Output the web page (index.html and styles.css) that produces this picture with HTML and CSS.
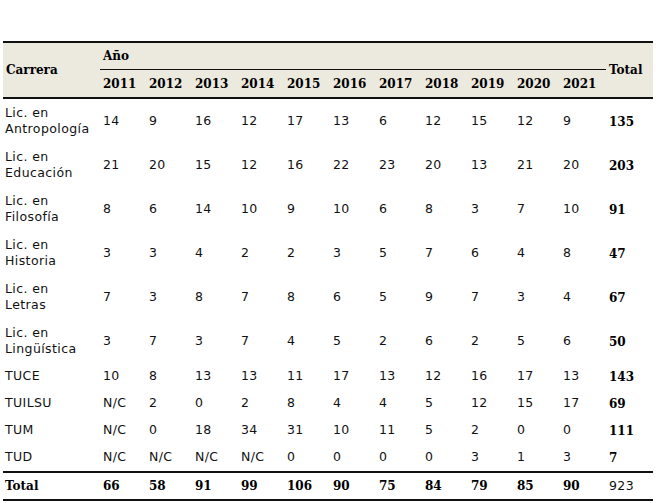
FILE: index.html
```html
<!DOCTYPE html>
<html lang="es">
<head>
<meta charset="utf-8">
<link rel="stylesheet" href="styles.css">
</head>
<body>
<table class="data">
  <colgroup>
    <col class="c-name">
    <col class="c-year"><col class="c-year"><col class="c-year"><col class="c-year"><col class="c-year"><col class="c-year"><col class="c-year"><col class="c-year"><col class="c-year"><col class="c-year"><col class="c-year">
    <col class="c-total">
  </colgroup>
  <thead>
    <tr class="h1">
      <th rowspan="2" class="hname">Carrera</th>
      <th colspan="11" class="hyear">Año</th>
      <th rowspan="2" class="htotal">Total</th>
    </tr>
    <tr class="h2">
      <th>2011</th><th>2012</th><th>2013</th><th>2014</th><th>2015</th><th>2016</th><th>2017</th><th>2018</th><th>2019</th><th>2020</th><th>2021</th>
    </tr>
  </thead>
  <tbody>
    <tr class="two"><td>Lic. en<br>Antropología</td><td>14</td><td>9</td><td>16</td><td>12</td><td>17</td><td>13</td><td>6</td><td>12</td><td>15</td><td>12</td><td>9</td><td class="tot">135</td></tr>
    <tr class="two"><td>Lic. en<br>Educación</td><td>21</td><td>20</td><td>15</td><td>12</td><td>16</td><td>22</td><td>23</td><td>20</td><td>13</td><td>21</td><td>20</td><td class="tot">203</td></tr>
    <tr class="two"><td>Lic. en<br>Filosofía</td><td>8</td><td>6</td><td>14</td><td>10</td><td>9</td><td>10</td><td>6</td><td>8</td><td>3</td><td>7</td><td>10</td><td class="tot">91</td></tr>
    <tr class="two"><td>Lic. en<br>Historia</td><td>3</td><td>3</td><td>4</td><td>2</td><td>2</td><td>3</td><td>5</td><td>7</td><td>6</td><td>4</td><td>8</td><td class="tot">47</td></tr>
    <tr class="two"><td>Lic. en<br>Letras</td><td>7</td><td>3</td><td>8</td><td>7</td><td>8</td><td>6</td><td>5</td><td>9</td><td>7</td><td>3</td><td>4</td><td class="tot">67</td></tr>
    <tr class="two"><td>Lic. en<br>Lingüística</td><td>3</td><td>7</td><td>3</td><td>7</td><td>4</td><td>5</td><td>2</td><td>6</td><td>2</td><td>5</td><td>6</td><td class="tot">50</td></tr>
    <tr class="one"><td>TUCE</td><td>10</td><td>8</td><td>13</td><td>13</td><td>11</td><td>17</td><td>13</td><td>12</td><td>16</td><td>17</td><td>13</td><td class="tot">143</td></tr>
    <tr class="one"><td>TUILSU</td><td>N/C</td><td>2</td><td>0</td><td>2</td><td>8</td><td>4</td><td>4</td><td>5</td><td>12</td><td>15</td><td>17</td><td class="tot">69</td></tr>
    <tr class="one"><td>TUM</td><td>N/C</td><td>0</td><td>18</td><td>34</td><td>31</td><td>10</td><td>11</td><td>5</td><td>2</td><td>0</td><td>0</td><td class="tot">111</td></tr>
    <tr class="one"><td>TUD</td><td>N/C</td><td>N/C</td><td>N/C</td><td>N/C</td><td>0</td><td>0</td><td>0</td><td>0</td><td>3</td><td>1</td><td>3</td><td class="tot">7</td></tr>
  </tbody>
  <tfoot>
    <tr class="sum"><th>Total</th><th>66</th><th>58</th><th>91</th><th>99</th><th>106</th><th>90</th><th>75</th><th>84</th><th>79</th><th>85</th><th>90</th><td class="grand">923</td></tr>
  </tfoot>
</table>
</body>
</html>
```

FILE: styles.css
```css
html, body {
  margin: 0;
  padding: 0;
  background: #ffffff;
}

body {
  padding: 41px 3px 0 3px;
}

.data {
  border-collapse: collapse;
  table-layout: fixed;
  width: 650px;
  font-family: "DejaVu Sans", Verdana, sans-serif;
  font-size: 12.5px;
  letter-spacing: 0.4px;
  line-height: 16px;
  color: #111;
}

.c-name { width: 97px; }
.c-year { width: 46px; }
.c-total { width: 47px; }

.data th {
  font-family: "DejaVu Serif", Georgia, serif;
  font-weight: bold;
  font-size: 12px;
  letter-spacing: 0;
  text-align: left;
  color: #000;
}

.data thead {
  background: #ece9df;
}

.data thead tr.h1 th {
  border-top: 2px solid #111;
  height: 26px;
  padding: 0 0 0 3px;
  vertical-align: middle;
}

.data thead th.hname {
  padding-left: 2px;
  border-bottom: 2px solid #111;
}

.data thead th.hyear {
  border-bottom: 1px solid #111;
}

.data thead th.htotal {
  border-bottom: 2px solid #111;
  padding-top: 2px;
}

.data thead tr.h2 th {
  height: 27px;
  padding: 0 0 0 3px;
  border-bottom: 2px solid #111;
  vertical-align: middle;
}

.data td {
  padding: 6px 0 6px 3px;
  vertical-align: middle;
  white-space: nowrap;
}

.data tr.one td {
  padding: 5px 0 6px 3px;
}

.data tbody td:first-child,
.data tbody tr.one td:first-child {
  padding-left: 2px;
}

.data td.tot {
  font-family: "DejaVu Serif", Georgia, serif;
  font-weight: bold;
  font-size: 12px;
  letter-spacing: 0;
  color: #000;
  padding-top: 7px;
  padding-bottom: 5px;
}

.data tr.one td.tot {
  padding-top: 6px;
  padding-bottom: 5px;
}

.data tfoot tr.sum th,
.data tfoot tr.sum td {
  border-top: 2px solid #111;
  border-bottom: 2px solid #111;
  height: 26px;
  padding: 0 0 0 3px;
  vertical-align: middle;
}

.data tfoot tr.sum th:first-child {
  padding-left: 2px;
}

.data td.grand {
  font-family: "DejaVu Sans", Verdana, sans-serif;
  font-size: 12.5px;
  letter-spacing: 0.4px;
}
```
